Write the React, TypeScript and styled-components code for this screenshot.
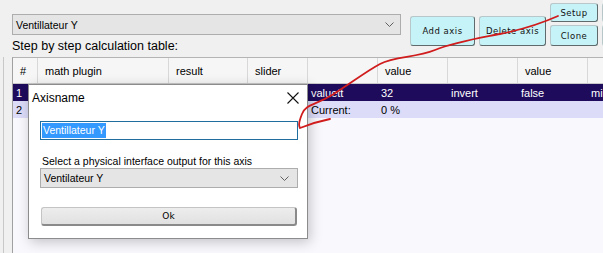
import React from "react";
import styled, { createGlobalStyle } from "styled-components";

const Global = createGlobalStyle`
  html, body { margin: 0; padding: 0; background: #f0f0f0; }
  body { font-family: "Liberation Sans", Arial, sans-serif; }
`;

const Screen = styled.div`
  position: relative;
  width: 603px;
  height: 253px;
  overflow: hidden;
  background: #f0f0f0;
  font-size: 11px;
  color: #000;
`;

const LeftEdge = styled.div`
  position: absolute;
  left: 3px;
  top: 57px;
  bottom: 0;
  width: 1px;
  background: #c8c8c8;
`;

const Top = styled.div`
  display: flex;
  align-items: flex-start;
  padding-left: 12px;
  height: 57px;
  width: 700px;
`;

const LeftCol = styled.div`
  display: flex;
  flex-direction: column;
  flex: 0 0 389px;
  width: 389px;
  padding-top: 14px;
`;

const Combo = styled.div`
  box-sizing: border-box;
  height: 21px;
  border: 1px solid #adadad;
  background: #e5e5e5;
  display: flex;
  align-items: center;
  justify-content: space-between;
  padding: 0 6px 0 3px;
  font-size: 10.5px;
`;

const Caption = styled.div`
  margin-top: 4px;
  font-size: 12.5px;
  line-height: 14px;
`;

const Buttons = styled.div`
  display: flex;
  flex: 0 0 auto;
  align-items: flex-start;
  gap: 4px;
  margin-left: 9px;
`;

const Stack = styled.div`
  display: flex;
  flex-direction: column;
  gap: 3px;
  padding-top: 3px;
`;

const CyanBtn = styled.div<{ $w: number; $h: number; $top?: number }>`
  box-sizing: border-box;
  flex: 0 0 auto;
  width: ${(p) => p.$w}px;
  height: ${(p) => p.$h}px;
  margin-top: ${(p) => p.$top ?? 0}px;
  background: #c6f3f7;
  border: 1px solid #b8c8ca;
  border-right-color: #5e6a6c;
  border-bottom-color: #5e6a6c;
  border-radius: 3px;
  display: flex;
  align-items: center;
  justify-content: center;
  font-family: "DejaVu Sans", Verdana, sans-serif;
  font-size: 8.5px;
  letter-spacing: 0.5px;
  color: #111;
`;

const Table = styled.div`
  margin-left: 12px;
  border-left: 1px solid #a0a0a0;
  border-top: 1px solid #b4b4b4;
  background: #f9f8fd;
  height: 196px;
`;

const cols = "25px 131px 79px 60px 70px 70px 70px 70px 70px";

const HeadRow = styled.div`
  display: grid;
  grid-template-columns: ${cols};
  height: 25px;
  background: #f6f6f6;
  border-bottom: 1px solid #c8c8c8;
`;

const HeadCell = styled.div`
  border-right: 1px solid #d8d8d8;
  display: flex;
  align-items: center;
  padding-left: 7px;
  font-size: 11px;
`;

const Row = styled.div<{ $dark?: boolean }>`
  display: grid;
  grid-template-columns: ${cols};
  height: 17px;
  background: ${(p) => (p.$dark ? "#1e0b5c" : "#dcdcf9")};
  color: ${(p) => (p.$dark ? "#fff" : "#000")};
`;

const Cell = styled.div`
  display: flex;
  align-items: center;
  padding-left: 3px;
  font-size: 11px;
  white-space: nowrap;
  overflow: hidden;
`;

const Dialog = styled.div`
  position: absolute;
  left: 28px;
  top: 84px;
  width: 280px;
  height: 155px;
  box-sizing: border-box;
  background: #fff;
  border: 1px solid #8c8c8c;
  box-shadow: 2px 3px 12px rgba(0, 0, 0, 0.22);
  display: flex;
  flex-direction: column;
`;

const TitleBar = styled.div`
  height: 25px;
  display: flex;
  align-items: center;
  justify-content: space-between;
  padding: 0 8px 0 3px;
  font-size: 12px;
`;

const Body = styled.div`
  display: flex;
  flex-direction: column;
  padding: 11px 9px 0 11px;
`;

const TextBox = styled.div`
  box-sizing: border-box;
  height: 19px;
  border: 1px solid #1f6e9e;
  display: flex;
  align-items: center;
  padding-left: 1px;
`;

const Selected = styled.span`
  background: #3399ff;
  color: #fff;
  font-size: 10.5px;
  line-height: 15px;
  padding: 0 1px;
`;

const Label = styled.div`
  margin-top: 14px;
  height: 14px;
  line-height: 14px;
  padding-left: 2px;
  font-size: 10.5px;
`;

const Select = styled(Combo)`
  height: 20px;
  padding-left: 3px;
  padding-right: 8px;
`;

const OkBtn = styled.div`
  box-sizing: border-box;
  margin-top: 19px;
  margin-left: 1px;
  margin-right: 1px;
  height: 19px;
  background: linear-gradient(#ededed, #e1e1e1);
  border: 1px solid #c4c4c4;
  border-right: 2px solid #8a8a8a;
  border-bottom: 2px solid #8a8a8a;
  border-radius: 3px;
  display: flex;
  align-items: center;
  justify-content: center;
  font-family: "DejaVu Sans", Verdana, sans-serif;
  font-size: 9px;
`;

const Overlay = styled.svg`
  position: absolute;
  left: 0;
  top: 0;
  pointer-events: none;
`;

const Chevron = () => (
  <svg width="9" height="5" viewBox="0 0 9 5">
    <path d="M0.5 0.5 L4.5 4.5 L8.5 0.5" fill="none" stroke="#606060" strokeWidth="1" />
  </svg>
);

const CloseX = () => (
  <svg width="12" height="12" viewBox="0 0 12 12">
    <path d="M0.5 0.5 L11.5 11.5 M11.5 0.5 L0.5 11.5" stroke="#111" strokeWidth="1.1" />
  </svg>
);

export default function App() {
  return (
    <Screen>
      <Global />
      <LeftEdge />
      <Top>
        <LeftCol>
          <Combo>
            <span>Ventillateur Y</span>
            <Chevron />
          </Combo>
          <Caption>Step by step calculation table:</Caption>
        </LeftCol>
        <Buttons>
          <CyanBtn $w={65} $h={30} $top={16}>Add axis</CyanBtn>
          <CyanBtn $w={67} $h={30} $top={16}>Delete axis</CyanBtn>
          <Stack>
            <CyanBtn $w={48} $h={19}>Setup</CyanBtn>
            <CyanBtn $w={48} $h={21}>Clone</CyanBtn>
          </Stack>
          <Stack>
            <CyanBtn $w={48} $h={19}></CyanBtn>
            <CyanBtn $w={48} $h={21}></CyanBtn>
          </Stack>
        </Buttons>
      </Top>
      <Table>
        <HeadRow>
          <HeadCell>#</HeadCell>
          <HeadCell>math plugin</HeadCell>
          <HeadCell>result</HeadCell>
          <HeadCell>slider</HeadCell>
          <HeadCell></HeadCell>
          <HeadCell>value</HeadCell>
          <HeadCell></HeadCell>
          <HeadCell>value</HeadCell>
          <HeadCell></HeadCell>
        </HeadRow>
        <Row $dark>
          <Cell>1</Cell>
          <Cell></Cell>
          <Cell></Cell>
          <Cell></Cell>
          <Cell>valuett</Cell>
          <Cell>32</Cell>
          <Cell>invert</Cell>
          <Cell>false</Cell>
          <Cell>min</Cell>
        </Row>
        <Row>
          <Cell>2</Cell>
          <Cell></Cell>
          <Cell></Cell>
          <Cell></Cell>
          <Cell>Current:</Cell>
          <Cell>0 %</Cell>
          <Cell></Cell>
          <Cell></Cell>
          <Cell></Cell>
        </Row>
      </Table>
      <Dialog>
        <TitleBar>
          <span>Axisname</span>
          <CloseX />
        </TitleBar>
        <Body>
          <TextBox>
            <Selected>Ventillateur Y</Selected>
          </TextBox>
          <Label>Select a physical interface output for this axis</Label>
          <Select>
            <span>Ventilateur Y</span>
            <Chevron />
          </Select>
          <OkBtn>Ok</OkBtn>
        </Body>
      </Dialog>
      <Overlay width="603" height="253" viewBox="0 0 603 253">
        <path
          d="M558 16 C540 24 520 30 500 34 S455 42 435 50 S395 56 380 64 S350 84 332 95 S306 104 302 114 S299 126 300 128 C310 124 320 121 330 119"
          fill="none"
          stroke="#d01c1c"
          strokeWidth="1.8"
          strokeLinecap="round"
          strokeLinejoin="round"
        />
      </Overlay>
    </Screen>
  );
}
